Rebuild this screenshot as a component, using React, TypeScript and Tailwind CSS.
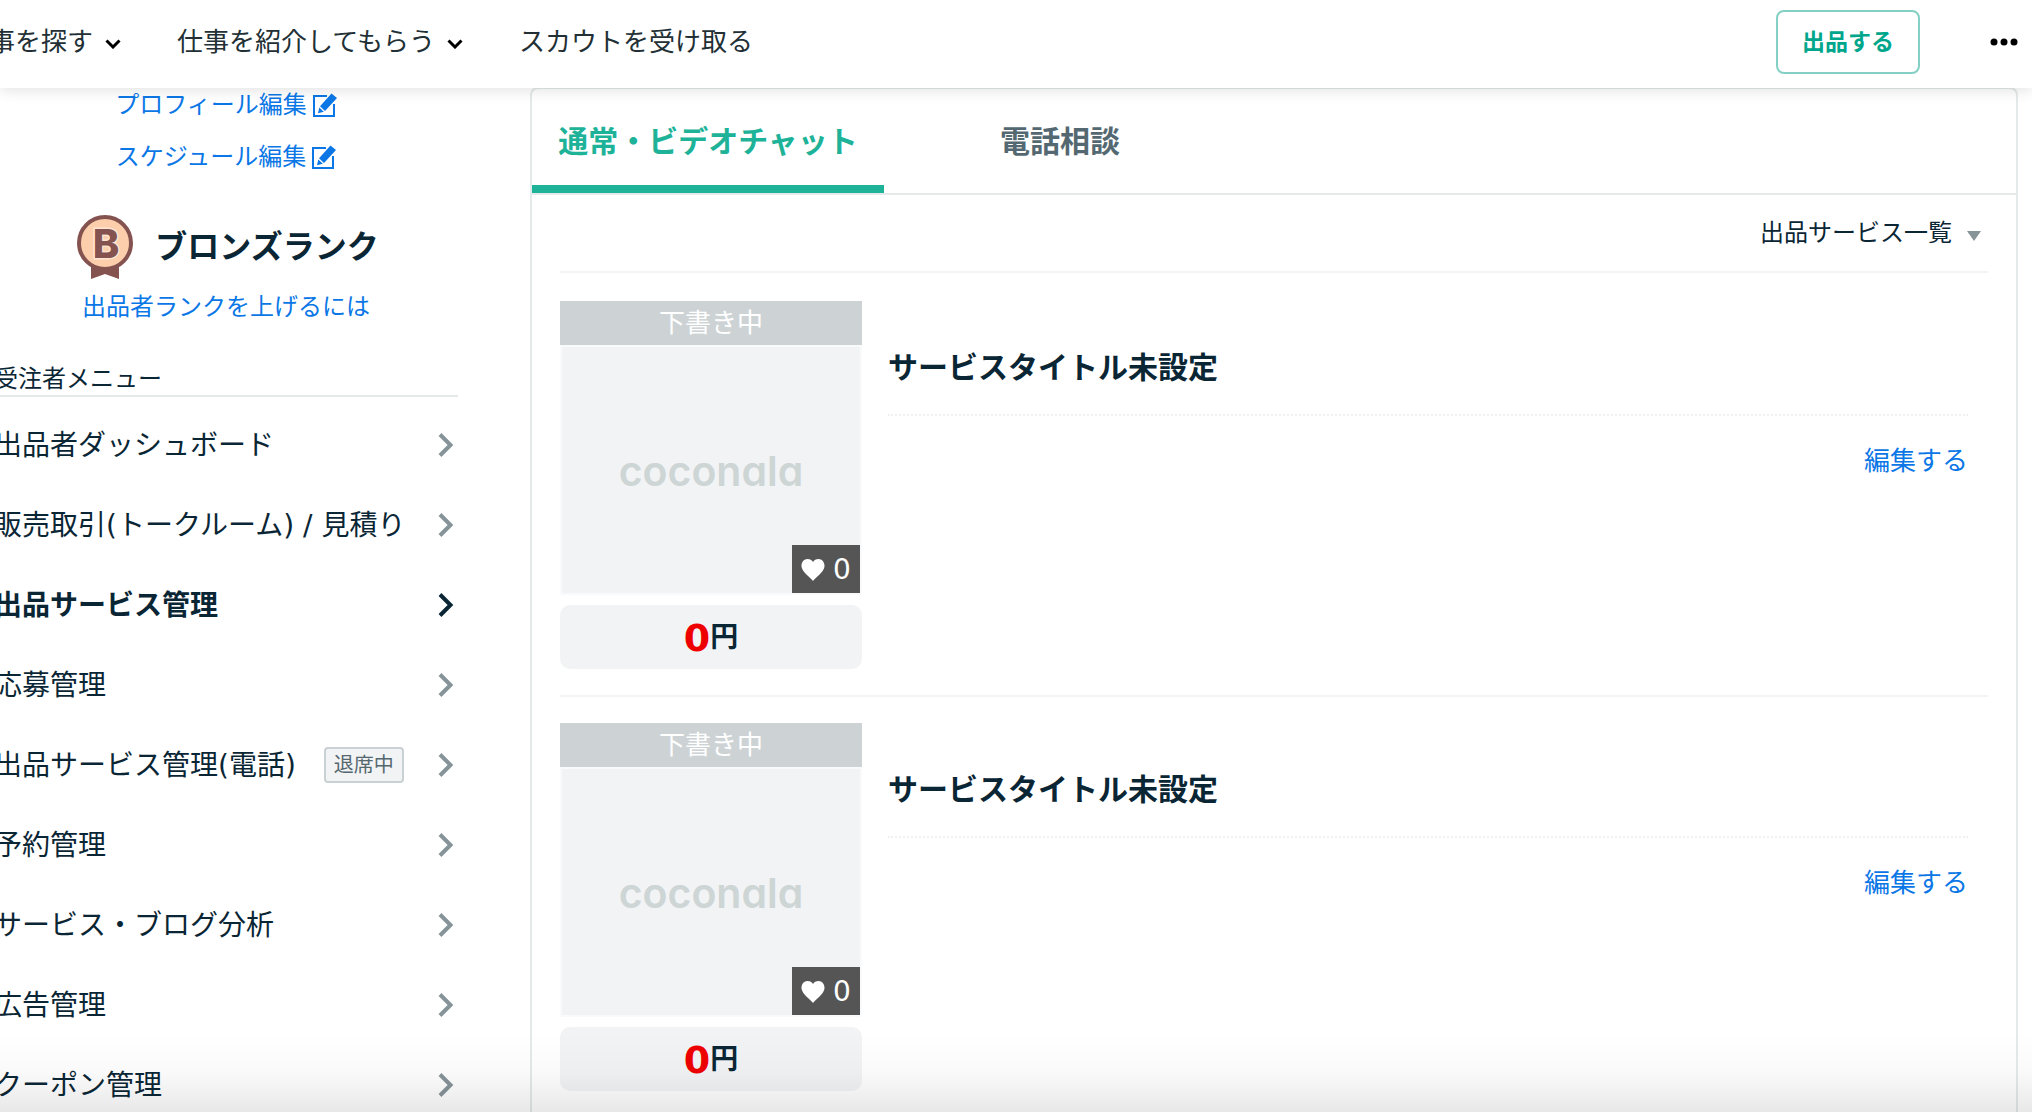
import { useState } from 'react';
import clsx from 'clsx';

type MenuItem = {
  label: string;
  badge?: string;
};

const MENU_ITEMS: MenuItem[] = [
  { label: '出品者ダッシュボード' },
  { label: '販売取引(トークルーム) / 見積り' },
  { label: '出品サービス管理' },
  { label: '応募管理' },
  { label: '出品サービス管理(電話)', badge: '退席中' },
  { label: '予約管理' },
  { label: 'サービス・ブログ分析' },
  { label: '広告管理' },
  { label: 'クーポン管理' },
];

const TABS = ['通常・ビデオチャット', '電話相談'];

const SERVICES = [
  { id: 1, status: '下書き中', title: 'サービスタイトル未設定', likes: 0, price: 0 },
  { id: 2, status: '下書き中', title: 'サービスタイトル未設定', likes: 0, price: 0 },
];

function ChevronDown() {
  return (
    <svg width="16" height="10" viewBox="0 0 16 10" fill="none" stroke="#000" strokeWidth="3" className="mt-1">
      <path d="M1.5 1.5 8 8l6.5-6.5" />
    </svg>
  );
}

function ChevronRight() {
  return (
    <svg width="16" height="24" viewBox="0 0 16 24" fill="none" stroke="currentColor" strokeWidth="4" className="shrink-0">
      <path d="M2 1.5 12.5 12 2 22.5" />
    </svg>
  );
}

function EditIcon() {
  return (
    <svg width="24" height="24" viewBox="0 0 24 24" className="shrink-0">
      <path d="M14 3H1v20h20V11" fill="none" stroke="currentColor" strokeWidth="2" />
      <path d="M18.5 0.5 24 5 12 18 7 13.2z M6.3 14.5 10.8 18.8 5 20.3z" fill="currentColor" />
    </svg>
  );
}

function BronzeMedal() {
  return (
    <svg width="56" height="64" viewBox="0 0 56 64" className="shrink-0">
      <path d="M14 44h28v20l-14-5-14 5z" fill="#845350" />
      <circle cx="28" cy="28" r="26" fill="#fdceab" stroke="#845350" strokeWidth="4" />
      <text
        x="29"
        y="43"
        textAnchor="middle"
        fontSize="40"
        fill="#845350"
        stroke="#fee5d3"
        strokeWidth="3"
        paintOrder="stroke"
        className="font-['Inter'] font-extrabold"
      >
        B
      </text>
    </svg>
  );
}

function Header() {
  return (
    <header className="relative z-10 flex h-[88px] shrink-0 items-center justify-between bg-white pr-3.5 pb-1 shadow-[0_2px_14px_rgba(0,0,0,0.12)]">
      <nav className="-ml-[37px] flex items-center gap-14 text-[26px] leading-9 whitespace-nowrap text-[#222f35]">
        <button type="button" className="flex items-center gap-3">
          仕事を探す
          <ChevronDown />
        </button>
        <button type="button" className="flex items-center gap-3">
          仕事を紹介してもらう
          <ChevronDown />
        </button>
        <a href="#scout">スカウトを受け取る</a>
      </nav>
      <div className="flex items-center gap-[70px]">
        <button
          type="button"
          className="h-16 w-36 rounded-lg border-2 border-[#85d0c4] text-[23px] font-bold text-[#00a68c]"
        >
          出品する
        </button>
        <button type="button" aria-label="メニュー">
          <svg width="28" height="8" viewBox="0 0 28 8">
            <circle cx="4" cy="4" r="3.5" />
            <circle cx="14" cy="4" r="3.5" />
            <circle cx="24" cy="4" r="3.5" />
          </svg>
        </button>
      </div>
    </header>
  );
}

function Sidebar() {
  const current = '出品サービス管理';

  return (
    <aside className="-ml-1.5 w-[464px] shrink-0">
      <div className="flex flex-col items-center text-2xl text-[#0b77e6]">
        <a href="#profile" className="flex h-[34px] items-center gap-1.5">
          プロフィール編集
          <EditIcon />
        </a>
        <a href="#schedule" className="mt-[18px] flex h-[34px] items-center gap-1.5">
          スケジュール編集
          <EditIcon />
        </a>
        <div className="mt-[41px] flex items-center gap-[22px] pl-1">
          <BronzeMedal />
          <p className="text-[32px] leading-10 font-bold text-[#0a2635]">ブロンズランク</p>
        </div>
        <a href="#rank" className="mt-3 leading-8">
          出品者ランクを上げるには
        </a>
      </div>

      <h2 className="mt-10 border-b-2 border-[#e4e9e9] text-2xl leading-8">受注者メニュー</h2>
      <ul className="mt-2 text-[28px]">
        {MENU_ITEMS.map((item) => (
          <li key={item.label}>
            <a
              href="#menu"
              className={clsx('flex h-20 items-center pr-1 whitespace-nowrap', item.label === current && 'font-bold')}
            >
              <span className="pt-0.5">{item.label}</span>
              {item.badge && (
                <span className="ml-7 rounded-sm border-2 border-[#c9d1d5] bg-[#f2f3f5] px-2 text-xl leading-8 text-[#556870]">
                  {item.badge}
                </span>
              )}
              <span className={clsx('ml-auto', item.label !== current && 'text-[#869399]')}>
                <ChevronRight />
              </span>
            </a>
          </li>
        ))}
      </ul>
    </aside>
  );
}

function ServiceCard({ service }: { service: (typeof SERVICES)[number] }) {
  return (
    <li className="flex border-b-2 border-[#f3f4f5] py-[26px]">
      <div className="w-[302px] shrink-0">
        <p className="bg-[#cdd3d5] text-center text-[26px] leading-[44px] text-white">{service.status}</p>
        <div className="relative flex h-[250px] items-center justify-center border-2 border-[#f9fafb] bg-[#f2f3f5] pt-0.5">
          <span className="font-['Inter'] text-[41px] leading-none font-semibold text-[#cdd5d5] [font-feature-settings:'cv11']">
            coconala
          </span>
          <div className="absolute right-0 bottom-0 flex h-12 w-[68px] items-center justify-center gap-2 bg-[#555] pt-0.5 text-[28px] leading-none text-white">
            <svg width="24" height="22" viewBox="0 0 24 22" fill="currentColor">
              <path d="M12 22C10 19 1 13 0.5 7.500C0.200 3 3 0 6.500 0 9 0 11 1.300 12 3 13 1.300 15 0 17.500 0 21 0 23.800 3 23.500 7.500 23 13 14 19 12 22z" />
            </svg>
            {service.likes}
          </div>
        </div>
        <p className="mt-2.5 flex h-16 items-center justify-center rounded-[10px] bg-[#f2f3f5] pt-0.5 text-[28px] font-bold">
          <span className="text-[38px]">
            <span className="text-[#ef0000]">{service.price}</span>
          </span>
          円
        </p>
      </div>
      <div className="ml-[26px] flex-1 pr-5">
        <h3 className="border-b-2 border-dotted border-[#f0f1f2] pt-[49px] pb-7 text-[30px] leading-9 font-bold">
          {service.title}
        </h3>
        <p className="mt-[27px] text-right text-[26px] leading-9">
          <a href="#edit" className="text-[#0b77e6]">
            編集する
          </a>
        </p>
      </div>
    </li>
  );
}

function ServicePanel() {
  const [activeTab, setActiveTab] = useState(TABS[0]);

  return (
    <main className="-mt-px mr-3.5 ml-[72px] flex-1 rounded-t-lg border-2 border-b-0 border-[#e4e9e9]">
      <div role="tablist" className="flex border-b-2 border-[#e4e9e9]">
        {TABS.map((tab) => (
          <button
            key={tab}
            type="button"
            role="tab"
            aria-selected={tab === activeTab}
            onClick={() => setActiveTab(tab)}
            className={clsx(
              'h-[104px] w-[352px] border-b-8 pt-2 text-[30px] font-bold whitespace-nowrap',
              tab === activeTab ? 'border-[#1eb399] text-[#1eb399]' : 'border-transparent text-[#546871]',
            )}
          >
            {tab}
          </button>
        ))}
      </div>
      <div className="px-7">
        <div className="flex h-[78px] items-center justify-end border-b-2 border-[#f3f4f5]">
          <div className="relative flex items-center">
            <select aria-label="表示するサービス" className="appearance-none bg-transparent pr-9 text-2xl leading-8">
              <option>出品サービス一覧</option>
            </select>
            <svg
              width="14"
              height="10"
              viewBox="0 0 14 10"
              fill="#869399"
              className="pointer-events-none absolute right-[7px] bottom-2"
            >
              <path d="M0 0h14L7 10z" />
            </svg>
          </div>
        </div>
        <ul className="pt-0.5">
          {SERVICES.map((service) => (
            <ServiceCard key={service.id} service={service} />
          ))}
        </ul>
      </div>
    </main>
  );
}

export default function App() {
  return (
    <div className="relative flex h-screen flex-col overflow-hidden bg-white font-['DejaVu_Sans','Noto_Sans_CJK_JP',sans-serif] text-[#0a2635]">
      <Header />
      <div className="flex min-h-0 flex-1">
        <Sidebar />
        <ServicePanel />
      </div>
      <div className="pointer-events-none absolute inset-x-0 bottom-0 h-20 bg-linear-to-b from-transparent via-black/2 to-black/9" />
    </div>
  );
}
